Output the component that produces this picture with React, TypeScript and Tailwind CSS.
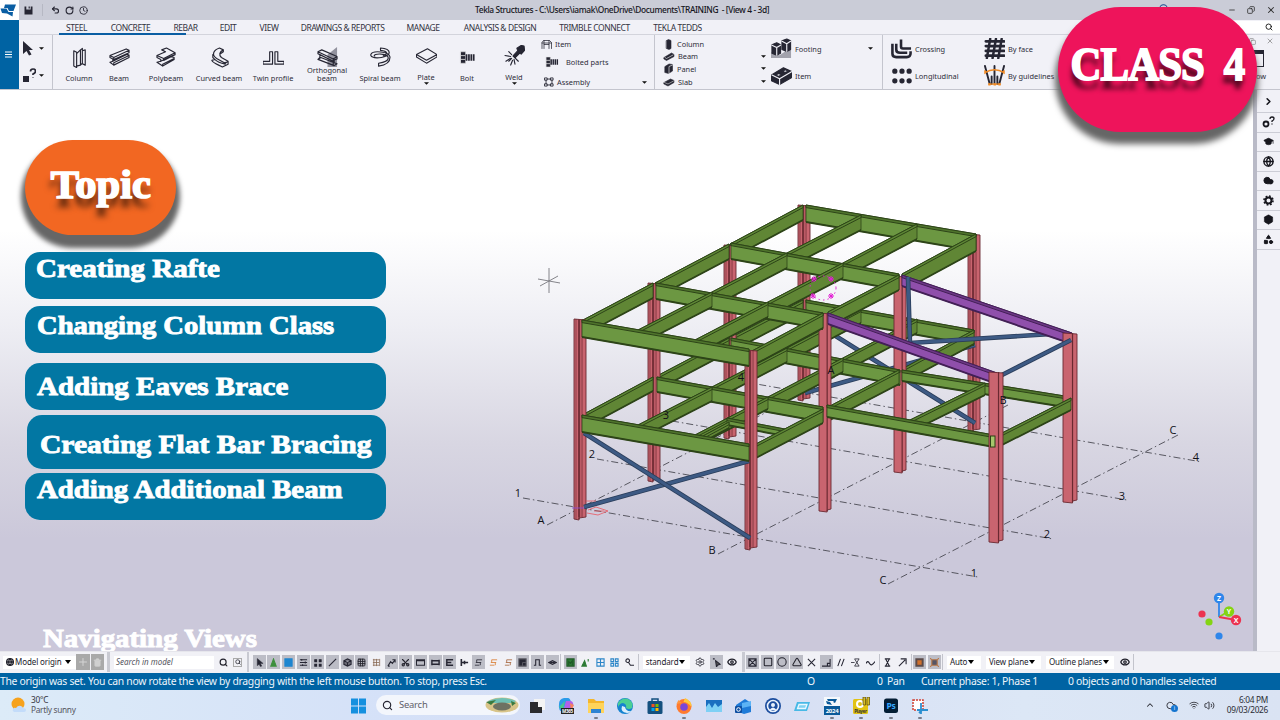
import React from 'react';
import {
  Box, ChevronRight, ChevronUp, Clock, Cloud, Eye, Globe, GraduationCap, Minus, MousePointer2,
  Plus, Undo2, RotateCw, Search, Settings, Shapes, Trash2, Volume2, Wifi, X, Copy, Circle,
  Square, Triangle, Scissors, Grid3x3,
} from 'lucide-react';

const INK = '#262633';

/* ---------- Ribbon icons ---------- */

const Glyph: React.FC<{ children: React.ReactNode; className?: string; box?: string }> = ({ children, className = 'w-[21px] h-[21px]', box = '0 0 22 22' }) => (
  <svg className={`${className} shrink-0`} viewBox={box} fill="none" stroke={INK} strokeWidth="1.2" strokeLinejoin="round" strokeLinecap="round">
    {children}
  </svg>
);

const ColumnIcon = () => (
  <Glyph><path d="M5 4l3 1.5v16L5 20zM8 7l4-4v16l-4 1M12 3l2-1.5v15.5l-2 2M14 4l3-1v16l-3-1.5" /></Glyph>
);
const BeamIcon = () => (
  <Glyph><path d="M1 9L18 2l3 1.5L5 11zM1 9v2l3 1.5V15L1 16l4 3 16-8v-2.5l-3-1M5 11v2l16-7V3.500M4 15l14-7M5 19v-2.500l16-7.500" /></Glyph>
);
const PolybeamIcon = () => (
  <Glyph><path d="M6 3L11 1l9 5-12 6-7-3 9-4zM1 9v2l4 2v2l-4 1 6 4 12-7v-2l-4-1 5-2V6M8 12v2l12-6M5 15l10-5M7 20v-2l12-6" /></Glyph>
);
const CurvedIcon = () => (
  <Glyph><path d="M11 1l4 2c-4 2-5 5-2 8l7 4-3 2-9-5C2 8 5 3 11 1zM4 8v3l2 2-3 1c1 3 8 5 11 7l6-3v-3M6 13c3 3 6 4 11 5v-2M15 3v2l-3 2" /></Glyph>
);
const TwinIcon = () => (
  <Glyph><path d="M7 5h3v13H0v-3h7zM12.500 5h3v10H22v3h-9.500z" /></Glyph>
);
const OrthoIcon = () => (
  <Glyph>
    <path d="M11 8L21 0v21H11z" fill="#92929e" stroke="none" />
    <path d="M1 5l4-2 16 7v2.500l-3 1v3l3 1-3 2L1 13l2-2V8L1 7zM1 5l16 7.500 4-2.500M3 8l14 7M1 13l3-2 14 5.500M17 12.500v3M17 19v-2" />
  </Glyph>
);
const SpiralIcon = () => (
  <Glyph>
    <path d="M11 1c12 1 12 8 1 10-9 1.500-12-1.500-11-3.500 2-4 19-3 20 3 0 7-8 9-12 9.500v-3c14-2 12-9 3-9.500-5-.5-9 1-7 2M11 1v2.500c8 1 8 4 3 5.500" />
  </Glyph>
);
const PlateIcon = () => (
  <Glyph><path d="M.5 10L12 4l10 6-11 6zM.5 10v2.500L11 19l11-6.500V10" /></Glyph>
);
const BoltIcon: React.FC<{ className?: string }> = ({ className }) => (
  <Glyph className={className}>
    <path d="M4 5h5v4H4zM4 9h5v4H4zM4 13h5v4H4z" fill={INK} stroke="#ddd" strokeWidth=".6" />
    <path d="M10 7.500v7M12.500 7.500v7M15 7.500v7M17.500 7.500v7" strokeWidth="1.800" strokeLinecap="butt" />
  </Glyph>
);
const WeldIcon = () => (
  <Glyph>
    <path d="M9.500 11.500l2 2 5-5 1.500 1 3.500-4L21 1l-3-.5-4.500 3 1 2.500z" fill={INK} />
    <path d="M8 14L5 17M10.500 15l1 5M9 16l-2 5M12 14l3 3M6.500 14L2 17M7 12l-6-1M8 10L5 7" />
  </Glyph>
);

const MiniItem = () => (
  <Glyph className="w-[11px] h-[11px]"><path d="M2 19V7l3-4h12l4 4v12M2 8h19M6 19v-8h10v8M6 3v8M16 3v8" strokeWidth="1.500" /></Glyph>
);
const MiniAssembly = () => (
  <Glyph className="w-[10px] h-[10px]"><path d="M2 2h5v5H2zM15 2h5v5h-5zM2 15h5v5H2zM15 15h5v5h-5zM7 4.500h8M7 17.500h8M4.500 7v8M17.500 7v8" strokeWidth="1.900" /></Glyph>
);
const MiniColumn = () => (
  <Glyph className="w-[11px] h-[11px]"><path d="M7 3l4-2 5 2v16l-4 2-5-2z" fill={INK} /></Glyph>
);
const MiniBeam = () => (
  <Glyph className="w-[12px] h-[11px]"><path d="M1 13L16 4l5 3v4L6 19l-5-3z" fill={INK} /><path d="M3 13l3 2 13-7" stroke="#fff" /></Glyph>
);
const MiniPanel = () => (
  <Glyph className="w-[11px] h-[11px]"><path d="M4 7l8-5 7 1v13l-8 5-7-2z" fill={INK} /><path d="M12 21V7l7-3" stroke="#fff" /></Glyph>
);
const MiniSlab = () => (
  <Glyph className="w-[12px] h-[11px]"><path d="M1 13L14 6l7 3v4l-12 7-8-4z" fill={INK} /><path d="M2 13l7 3 11-6" stroke="#ddd" /></Glyph>
);
const FootingIcon = () => (
  <Glyph>
    <path d="M0 15l9 3 12-8v11H0z" fill="#a2a2ac" stroke="none" />
    <path d="M1 7l5-2 4 2v9l-4 2-5-2zM11.500 3l5-2 4 2v9l-4 2-5-2z" fill={INK} />
    <path d="M1 7.500L6 10l4-2.500M6 10v8M11.500 3.500l5 2.500 4-2.500M16.500 6v8" stroke="#f1f1f7" />
  </Glyph>
);
const BrickIcon = () => (
  <Glyph>
    <path d="M.5 10.500L13 3l9 4v6L9 20.500l-8.500-4z" fill={INK} />
    <path d="M1 10.500l8 4L21.500 7M9 14.500v6" stroke="#f1f1f7" />
    <path d="M5 10.500l3-1.700 3 1.300-3 1.900zM12 6.500l3-1.600 3 1.300-3 1.700z" fill="#f1f1f7" />
  </Glyph>
);
const CrossingIcon = () => (
  <Glyph><path d="M1.500 6v10.500q0 3.500 4 3.500h11q4 0 4-4v-2M5.500 6v6q0 3.500 4 3.500H17M10.500 1.500V9q0 2 2 2H21" strokeWidth="2.700" strokeLinecap="butt" /></Glyph>
);
const LongitudinalIcon = () => (
  <Glyph><path d="M4 6.500h.01M11.500 6.500h.01M19 6.500h.01M4 16.500h.01M11.500 16.500h.01M19 16.500h.01" strokeWidth="5.500" /></Glyph>
);
const FaceIcon = () => (
  <Glyph>
    <path d="M2 3.500h19M2 8.500h19M2 13.500h19M2 18.500h19" strokeWidth="3" />
    <path d="M6.500 1L3 21M12.500 1L9 21M18.500 1L15 21" strokeWidth="2.600" />
  </Glyph>
);
const GuideIcon = () => (
  <Glyph>
    <path d="M1 1l5 19M8 12v8M11 1v18M14 12v8M21 1l-5 19" strokeWidth="2" />
    <path d="M1 8Q11 2 21 8M5 20h12M1 6v3M21 6v3" stroke="#f08a24" strokeWidth="1.500" />
    <path d="M4.500 19h2.500v2.500H4.500zM10 19h2.500v2.500H10zM15 19h2.500v2.500H15z" fill="#f08a24" stroke="none" />
  </Glyph>
);

const Caret: React.FC<{ className?: string }> = ({ className = '' }) => (
  <svg className={`w-[5px] h-[3px] shrink-0 ${className}`} viewBox="0 0 6 3"><path d="M0 0h6L3 3z" fill="#111" /></svg>
);

/* ---------- Top of the window ---------- */

const TitleBar = () => (
  <div className="flex h-5 items-center bg-[#caccd7]">
    <div className="flex h-5 w-[19px] items-center bg-white">
      <svg className="h-[13px] w-4" viewBox="0 0 16 13">
        <path d="M5 .5h11L13.500 7H9L7.500 4H4z" fill="#0a5ea3" />
        <path d="M.5 4.500h6L8.500 8H13l-.5 4.500L7 9.500 2 9z" fill="#0a5ea3" />
      </svg>
    </div>
    <svg className="ml-[5px] h-[9px] w-[9px]" viewBox="0 0 9 9">
      <path d="M.5.5h1.800v3h4.400v-3h1.800v8h-8zM4.600.5h1.200v2H4.600z" fill={INK} />
    </svg>
    <div className="ml-[9px] h-3 w-px bg-[#b6b8c3]" />
    <Undo2 className="ml-2 h-[10px] w-[9px]" strokeWidth={3} color={INK} />
    <RotateCw className="ml-[5px] h-[9px] w-[9px]" strokeWidth={3} color={INK} />
    <Clock className="ml-[5px] h-[9px] w-[9px]" strokeWidth={2.300} color={INK} />
    <div className="ml-[387px] w-[300px] whitespace-pre text-[8.400px] font-medium tracking-[-0.380px] text-[#16161d]">
      Tekla Structures - C:\Users\iamak\OneDrive\Documents\TRAINING  - [View 4 - 3d]
    </div>
    <div className="ml-auto flex items-center gap-[11px] pr-[4px] text-[#333]">
      <Circle className="mb-1 mr-[49px] h-[9px] w-[9px]" strokeWidth={3} color="#1b4a91" />
      <Minus className="h-2 w-2" strokeWidth={2.500} />
      <Copy className="h-2 w-2 -scale-x-100" strokeWidth={2.500} />
      <X className="h-[10px] w-[10px]" strokeWidth={2.500} />
    </div>
  </div>
);

const TABS = [
  { name: 'STEEL', cell: 'w-[47px]' },
  { name: 'CONCRETE', cell: 'w-[61px]' },
  { name: 'REBAR', cell: 'w-[49px]' },
  { name: 'EDIT', cell: 'w-[36px]' },
  { name: 'VIEW', cell: 'w-[46px]' },
  { name: 'DRAWINGS & REPORTS', cell: 'w-[101px]' },
  { name: 'MANAGE', cell: 'w-[60px]' },
  { name: 'ANALYSIS & DESIGN', cell: 'w-[94px]' },
  { name: 'TRIMBLE CONNECT', cell: 'w-[95px]' },
  { name: 'TEKLA TEDDS', cell: 'w-[71px]' },
];

const TabRow = () => (
  <div className="flex h-[15px] items-center border-b border-[#d3d4dc]">
    <div className="flex h-[15px] pl-[34px]">
      {TABS.map((t, i) => (
        <div key={t.name} className={`${t.cell} relative flex h-[15px] items-center justify-center whitespace-nowrap pt-[2px] text-[8.500px] tracking-[-0.450px] text-[#33333f]`}>
          {t.name}
          {i === 0 && <div className="absolute left-[6px] top-[13px] h-[2px] w-[127px] bg-[#0a5ea3]" />}
        </div>
      ))}
    </div>
    <div className="ml-auto flex h-[12px] w-[60px] items-center justify-end bg-white pr-[7px]">
      <Search className="h-[8px] w-[8px]" strokeWidth={2.500} />
    </div>
  </div>
);

const TOOLS = [
  { label: 'Column', cell: 'w-[38px]', icon: <ColumnIcon /> },
  { label: 'Beam', cell: 'w-[42px]', icon: <BeamIcon /> },
  { label: 'Polybeam', cell: 'w-[52px]', icon: <PolybeamIcon /> },
  { label: 'Curved beam', cell: 'w-[54px]', icon: <CurvedIcon /> },
  { label: 'Twin profile', cell: 'w-[54px]', icon: <TwinIcon /> },
  { label: 'Orthogonal beam', cell: 'w-[54px]', icon: <OrthoIcon />, wrap: true },
  { label: 'Spiral beam', cell: 'w-[52px]', icon: <SpiralIcon /> },
  { label: 'Plate', cell: 'w-[40px]', icon: <PlateIcon />, caret: true },
  { label: 'Bolt', cell: 'w-[42px]', icon: <BoltIcon /> },
  { label: 'Weld', cell: 'w-[52px]', icon: <WeldIcon />, caret: true },
];

const Row: React.FC<{ icon: React.ReactNode; label: string; className?: string; caret?: boolean }> = ({ icon, label, className = '', caret }) => (
  <div className={`flex items-center ${className}`}>
    {icon}
    <span className="ml-[3px] whitespace-nowrap">{label}</span>
    {caret && <Caret className="ml-auto" />}
  </div>
);

const Ribbon = () => (
  <div className="flex h-[54px] text-[7.400px] leading-[8px] text-[#2d2d39]">
    <div className="flex w-[34px] flex-col justify-between border-r border-[#c4c5ce] py-[6px] pl-[4px]">
      <div className="flex items-center gap-[6px]">
        <svg className="h-[15px] w-[10px]" viewBox="0 0 10 15"><path d="M0 0l10 9H6l2.500 4.500L6 14.500 3.500 10 0 13z" fill={INK} /></svg>
        <Caret />
      </div>
      <div className="flex items-center gap-[3px]">
        <svg className="h-[15px] w-[13px]" viewBox="0 0 13 15">
          <path d="M0 8h6v6H0z" fill={INK} />
          <path d="M7.500 3.500q0-2.500 2.500-2.500t2.500 2.200Q12.500 5 10 6v1M10 9v.6" fill="none" stroke={INK} strokeWidth="1.700" />
        </svg>
        <Caret />
      </div>
    </div>
    <div className="flex w-[602px] border-r border-[#c4c5ce] pl-[7px]">
      {TOOLS.map((t) => (
        <div key={t.label} className={`${t.cell} flex flex-col items-center text-center ${t.caret ? 'pt-[10px]' : 'pt-[12px]'}`}>
          {t.icon}
          <div className={t.wrap ? '-mt-[2px] w-[46px]' : t.caret ? 'mt-[7px] whitespace-nowrap' : 'mt-[6px] whitespace-nowrap'}>{t.label}</div>
          {t.caret && <Caret className="mt-px" />}
        </div>
      ))}
      <div className="flex w-[107px] flex-col pt-[4px]">
        <Row className="h-[10px] pl-px" icon={<MiniItem />} label="Item" />
        <Row className="mt-[8px] h-[10px] pl-[3px]" icon={<BoltIcon className="mr-[2px] h-[18px] w-[18px]" />} label="Bolted parts" />
        <Row className="mt-[10px] h-[10px] pl-[4px]" icon={<MiniAssembly />} label="Assembly" caret />
      </div>
    </div>
    <div className="flex w-[228px] border-r border-[#c4c5ce]">
      <div className="flex w-[111px] flex-col pl-[8px] pt-[3px]">
        <Row className="h-[12px]" icon={<MiniColumn />} label="Column" />
        <Row className="h-[12px]" icon={<MiniBeam />} label="Beam" caret />
        <Row className="h-[13px]" icon={<MiniPanel />} label="Panel" caret />
        <Row className="h-[13px]" icon={<MiniSlab />} label="Slab" caret />
      </div>
      <div className="flex w-[107px] flex-col gap-[6px] pl-[5px] pt-[3px]">
        <Row icon={<FootingIcon />} label="Footing" caret />
        <Row icon={<BrickIcon />} label="Item" />
      </div>
    </div>
    <div className="flex w-[94px] flex-col gap-[6px] pl-[8px] pt-[3px]">
      <Row icon={<CrossingIcon />} label="Crossing" />
      <Row icon={<LongitudinalIcon />} label="Longitudinal" />
    </div>
    <div className="flex flex-col gap-[6px] pl-[7px] pt-[3px]">
      <Row icon={<FaceIcon />} label="By face" />
      <Row icon={<GuideIcon />} label="By guidelines" />
    </div>
    <div className="ml-auto flex w-[46px] flex-col">
      <div className="flex h-[12px] items-center justify-end gap-[10px] pr-[6px] text-[#777]">
        <Copy className="h-[7px] w-[7px]" />
        <X className="h-2 w-2" />
      </div>
      <div className="mt-[3px] h-[17px] w-[30px] border border-t-4 border-[#262633]" />
      <div className="mt-[5px] pl-1">Window</div>
    </div>
  </div>
);

/* ---------- 3D model ---------- */

type Pt = [number, number];
const pts = (...p: Pt[]) => p.map((q) => q.join(',')).join(' ');

interface MemberProps { a: Pt; b: Pt; d?: number; web?: string; flange?: string; edge?: string }

// I-beam seen slightly from above: web face, top flange strip, bottom flange strip
const Member: React.FC<MemberProps> = ({ a, b, d = 15, web = '#6c9742', flange = '#4f742c', edge = '#2d4418' }) => {
  const down = (p: Pt, k: number): Pt => [p[0], p[1] + k];
  return (
    <g stroke={edge} strokeWidth=".8" strokeLinejoin="round">
      <polygon points={pts(a, b, down(b, d), down(a, d))} fill={web} />
      <polygon points={pts(a, b, down(b, 2.6), down(a, 2.6))} fill={flange} strokeWidth="1" />
      <polygon points={pts(down(a, d - 1), down(b, d - 1), down(b, d + 1), down(a, d + 1))} fill={edge} stroke="none" />
    </g>
  );
};

const Along: React.FC<{ a: Pt; b: Pt; d?: number }> = ({ a, b, d = 14 }) => <Member a={a} b={b} d={d} web="#608635" flange="#5d8635" />;
const Rafter: React.FC<{ a: Pt; b: Pt }> = ({ a, b }) => <Member a={a} b={b} d={11} web="#8f4fab" flange="#6d3786" edge="#432056" />;

const Post: React.FC<{ x: number; top: number; bottom: number; w?: number; solid?: boolean }> = ({ x, top, bottom, w = 12, solid }) => {
  const split = solid ? w * 0.68 : w * 0.42;
  return (
    <g stroke="#6a2931" strokeWidth=".9">
      <polygon points={pts([x, top], [x + w, top + 1], [x + w, bottom - 2], [x + split, bottom - 1], [x + split, bottom + 1], [x, bottom])} fill="#c9646f" />
      {!solid && <rect x={x + split - 1} y={top} width="2.200" height={bottom - top - 2} fill="#8e3d47" stroke="none" />}
      {!solid && <line x1={x + 2} y1={top} x2={x + 2} y2={bottom} strokeWidth=".6" />}
      <line x1={x + split} y1={top} x2={x + split} y2={bottom} strokeWidth="1.200" />
      {!solid && <line x1={x + split + 3} y1={top} x2={x + split + 3} y2={bottom - 2} strokeWidth=".7" />}
    </g>
  );
};

const Brace: React.FC<{ a: Pt; b: Pt }> = ({ a, b }) => (
  <g>
    <line x1={a[0]} y1={a[1]} x2={b[0]} y2={b[1]} stroke="#2a3d5a" strokeWidth="4.600" />
    <line x1={a[0]} y1={a[1]} x2={b[0]} y2={b[1]} stroke="#3d5a84" strokeWidth="3" />
  </g>
);

const GRID: [Pt, Pt][] = [
  [[523, 498], [978, 577]],
  [[597, 459], [1053, 539]],
  [[672, 421], [1127, 500]],
  [[745, 382], [1202, 462]],
  [[547, 525], [835, 377]],
  [[718, 554], [1008, 405]],
  [[888, 584], [1178, 435]],
];

const GRID_LABELS: [string, number, number][] = [
  ['1', 518, 497], ['2', 592, 458], ['3', 666, 419], ['4', 741, 381],
  ['A', 541, 524], ['B', 712, 554], ['C', 883, 584],
  ['1', 974, 577], ['2', 1047, 538], ['3', 1122, 500], ['4', 1196, 461],
  ['A', 831, 374], ['B', 1003, 404], ['C', 1173, 434],
];

const Model = () => (
  <svg className="block h-[561px] w-[1253px]" viewBox="0 90 1253 561">
    <g stroke="#4a4a52" strokeWidth=".9" strokeDasharray="7 3 1.500 3">
      {GRID.map(([a, b], i) => <line key={i} x1={a[0]} y1={a[1]} x2={b[0]} y2={b[1]} />)}
    </g>

    {/* axis 4 */}
    <Post x={798} top={205} bottom={400} />
    <Post x={968} top={234} bottom={431} />
    <Brace a={[810, 320]} b={[975, 423]} />
    <Brace a={[805, 393]} b={[975, 345]} />
    <Member a={[806, 300]} b={[974, 330]} />
    <Member a={[806, 205]} b={[976, 234]} d={17} />

    {/* bay 3-4 */}
    <Along a={[730, 338]} b={[803, 300]} />
    <Along a={[787, 348]} b={[861, 309]} />
    <Along a={[843, 358]} b={[917, 319]} />
    <Along a={[902, 369]} b={[974, 330]} />
    <Along a={[730, 244]} b={[803, 205]} d={15} />
    <Along a={[787, 253]} b={[861, 215]} d={15} />
    <Along a={[843, 263]} b={[917, 224]} d={15} />
    <Along a={[902, 274]} b={[976, 234]} d={17} />

    {/* axis 3 */}
    <Post x={724} top={245} bottom={438} />
    <Post x={894} top={276} bottom={472} solid />
    <Member a={[731, 338]} b={[900, 370]} />
    <Member a={[902, 370]} b={[1071, 397]} d={11} />
    <Member a={[731, 243]} b={[899, 274]} d={16} />
    <Brace a={[910, 343]} b={[1067, 333]} />
    <Rafter a={[902, 275]} b={[1072, 333]} />
    <Brace a={[908, 277]} b={[910, 345]} />
    <Post x={1063} top={333} bottom={502} w={14} solid />
    <Brace a={[1000, 376]} b={[1071, 340]} />

    {/* bay 2-3 */}
    <Along a={[655, 377]} b={[729, 338]} />
    <Along a={[712, 387]} b={[787, 348]} />
    <Along a={[768, 397]} b={[843, 358]} />
    <Along a={[828, 407]} b={[899, 370]} />
    <Along a={[910, 420]} b={[985, 383]} d={12} />
    <Along a={[1000, 434]} b={[1071, 398]} d={12} />
    <Along a={[655, 283]} b={[729, 244]} d={15} />
    <Along a={[712, 292]} b={[787, 253]} d={15} />
    <Along a={[768, 302]} b={[843, 263]} d={15} />
    <Along a={[828, 312]} b={[899, 275]} d={15} />

    {/* axis 2 */}
    <Post x={648} top={283} bottom={481} />
    <Post x={819} top={313} bottom={511} solid />
    <Member a={[657, 377]} b={[823, 407]} />
    <Member a={[827, 405]} b={[994, 435]} d={12} />
    <Member a={[656, 283]} b={[823, 313]} d={16} />
    <Rafter a={[828, 313]} b={[997, 373]} />
    <Post x={989} top={372} bottom={542} w={14} solid />
    <rect x="990.500" y="436" width="4.500" height="11" fill="#a6c66c" stroke="#2a4115" />

    {/* bay 1-2 */}
    <Along a={[584, 414]} b={[653, 377]} />
    <Along a={[638, 425]} b={[712, 387]} />
    <Along a={[695, 435]} b={[768, 397]} d={12} />
    <Member a={[727, 418]} b={[790, 430]} d={7} />
    <Along a={[703, 436]} b={[729, 422]} d={6} />
    <Along a={[752, 446]} b={[823, 409]} />
    <Along a={[583, 320]} b={[653, 283]} d={15} />
    <Along a={[638, 330]} b={[712, 292]} d={15} />
    <Along a={[695, 340]} b={[768, 302]} d={15} />
    <Along a={[752, 351]} b={[823, 313]} d={15} />

    {/* axis 1 */}
    <Post x={574} top={319} bottom={519} />
    <Post x={745} top={350} bottom={549} />
    <Brace a={[584, 507]} b={[749, 461]} />
    <Brace a={[584, 433]} b={[750, 538]} />
    <Member a={[582, 415]} b={[749, 444]} d={17} />
    <Member a={[582, 320]} b={[749, 349]} d={17} />

    <g fill="#111118" fontFamily="'Open Sans', 'Noto Sans', sans-serif" fontSize="11" textAnchor="middle">
      {GRID_LABELS.map(([t, x, y], i) => <text key={i} x={x} y={y}>{t}</text>)}
    </g>

    {/* work plane origin */}
    <g fill="none" stroke="#e8555f" strokeWidth=".8">
      <path d="M586 501h10M588 510l8-3 12 4-10 4-11-2M594 511h10" />
      <path d="M572 508h12" stroke="#8a4be0" />
    </g>

    {/* rotation centre marker */}
    <ellipse cx="823" cy="288" rx="13" ry="12" fill="none" stroke="#e21fd3" strokeDasharray="1.500 3" />
    <g stroke="#e21fd3" strokeWidth="1">
      {[[814, 279], [831, 279], [813, 296], [831, 296]].map(([x, y]) => (
        <path key={`${x}-${y}`} d={`M${x - 3} ${y}h6M${x} ${y - 3}v6M${x - 2} ${y - 2}l4 4M${x + 2} ${y - 2}l-4 4`} />
      ))}
    </g>

    {/* cursor */}
    <path d="M538 279l22 4M540 286l18-10M549 268v25" stroke="#77777d" strokeWidth=".9" />

    {/* axis triad */}
    <g strokeWidth="1.800">
      <path d="M1219 617v-19" stroke="#2f86ea" />
      <path d="M1219 617l10-6" stroke="#84d413" />
      <path d="M1219 617l17 3" stroke="#ec3350" />
    </g>
    <circle cx="1219" cy="598" r="5.200" fill="#2f86ea" />
    <circle cx="1229" cy="611.500" r="5.200" fill="#84d413" />
    <circle cx="1236" cy="620" r="5.200" fill="#ec3350" />
    <circle cx="1202" cy="614" r="3.600" fill="#ec3350" />
    <circle cx="1209" cy="622" r="3.600" fill="#84d413" />
    <circle cx="1219" cy="636" r="3.600" fill="#2f86ea" />
    <g fill="#fff" fontFamily="'Open Sans', sans-serif" fontSize="7" fontWeight="bold" textAnchor="middle">
      <text x="1219" y="600.500">Z</text>
      <text x="1229" y="614">Y</text>
      <text x="1236" y="622.500">X</text>
    </g>
  </svg>
);

/* ---------- Video callouts ---------- */

const TOPICS = [
  { text: 'Creating Rafte', box: 'h-[47px] pl-[11px] pt-0', type: 'scale-x-[1.115]' },
  { text: 'Changing Column Class', box: 'mt-[7px] h-[47px] pl-[12px] pt-[3px]', type: 'scale-x-[1.100]' },
  { text: 'Adding Eaves Brace', box: 'mt-[10px] h-[47px] pl-[12px] pt-[7px]', type: 'scale-x-[1.115]' },
  { text: 'Creating Flat Bar Bracing', box: 'ml-[2px] mt-[5px] h-[54px] pl-[13px] pt-[13px]', type: 'scale-x-[1.137]' },
  { text: 'Adding Additional Beam', box: 'mt-[4px] h-[47px] pl-[12px] pt-0', type: 'scale-x-[1.107]' },
];

const Callouts = () => (
  <div className="absolute left-[25px] top-[162px] w-[361px]">
    {TOPICS.map((t) => (
      <div key={t.text} className={`${t.box} rounded-[15px] bg-[#0277a3]`}>
        <div className={`${t.type} w-max origin-left whitespace-nowrap font-['Liberation_Serif',serif] text-[26px] font-bold leading-[34px] text-white [-webkit-text-stroke:0.900px_white]`}>
          {t.text}
        </div>
      </div>
    ))}
  </div>
);

const Viewport = () => (
  <div className="relative w-[1253px] overflow-hidden bg-[linear-gradient(to_bottom,#fff_25%,#ededf3_43%,#d8d6e2_63%,#cbc8da_80%)]">
    <Model />
    <div className="absolute left-[25px] top-[50px] flex h-[95px] w-[151px] items-center justify-center rounded-[48px] bg-[#f26722] pb-[5px] font-['Liberation_Serif',serif] text-[39px] font-bold text-white shadow-[0_9px_5px_4px_#666]">
      <span className="scale-x-[1.090] [-webkit-text-stroke:1.600px_white] [text-shadow:-1px_9px_6px_#000a]">Topic</span>
    </div>
    <Callouts />
    <div className="absolute left-[43px] top-[537px] w-max origin-left scale-x-[1.109] whitespace-nowrap font-['Liberation_Serif',serif] text-[26px] font-bold leading-[24px] text-white [-webkit-text-stroke:0.900px_white]">
      Navigating Views
    </div>
  </div>
);

const HelpGear = () => (
  <svg className="h-[13px] w-[13px]" viewBox="0 0 13 13" fill="none" stroke="#16161d">
    <circle cx="4" cy="8" r="2.500" strokeWidth="1.800" />
    <path d="M8 3q0-2 2-2t2 1.700Q12 4 10 5v1M10 7.500v1" strokeWidth="1.300" />
  </svg>
);

const GearIcon = () => (
  <svg className="h-[11px] w-[11px]" viewBox="0 0 11 11" fill="none" stroke="#16161d">
    <circle cx="5.500" cy="5.500" r="3" strokeWidth="2" />
    <circle cx="5.500" cy="5.500" r="4.500" strokeWidth="1.600" strokeDasharray="1.770 1.764" />
  </svg>
);

const SidePanel = () => {
  const icon = 'w-[11px] h-[11px]';
  const items = [
    <HelpGear />,
    <GraduationCap className={`${icon} fill-[#16161d]`} strokeWidth={1.500} />,
    <Globe className={icon} strokeWidth={3} />,
    <Cloud className={`${icon} fill-[#16161d]`} />,
    <GearIcon />,
    <Box className={`${icon} fill-[#16161d]`} stroke="#16161d" strokeWidth={1.300} />,
    <Shapes className={`${icon} fill-[#16161d]`} />,
  ];
  return (
    <div className="flex flex-1 flex-col border-l-4 border-[#b9bac7] bg-[#f1f1f7] text-[#16161d]">
      <div className="flex h-[22px] items-center justify-center"><ChevronRight className={icon} strokeWidth={3.500} /></div>
      {items.map((it, i) => (
        <div key={i} className="flex h-[19.500px] items-center justify-center border-t border-[#cccdd6]">{it}</div>
      ))}
      <div className="border-t border-[#cccdd6]" />
    </div>
  );
};

/* ---------- Selection toolbar ---------- */

const Cell: React.FC<{ on?: boolean; children: React.ReactNode }> = ({ on, children }) => (
  <div className="flex w-[14.650px] shrink-0 justify-center">
    <div className={`flex h-[14px] w-[13px] items-center justify-center ${on ? 'bg-[#bcbdc6]' : ''}`}>{children}</div>
  </div>
);

const Mark: React.FC<{ d: string; color?: string; fill?: string; w?: number }> = ({ d, color = INK, fill = 'none', w = 1.2 }) => (
  <svg className="h-[9px] w-[9px]" viewBox="0 0 10 10"><path d={d} stroke={color} fill={fill} strokeWidth={w} /></svg>
);

const SELECT_ICONS: [boolean, React.ReactNode][] = [
  [true, <Mark d="M2.500.5L9 6H6l1.500 3-1.500.5L4.500 7l-2 1.500z" fill={INK} w={0.5} />],
  [true, <Mark d="M5 1l3 8H2z" color="#3d8f3d" fill="#3d8f3d" />],
  [true, <Mark d="M1 1h8v8H1z" color="#1e86d0" fill="#1e86d0" />],
  [true, <Mark d="M1 2h8M1 5h8M1 8h8M3 1v2M7 4v2M4 7v2" />],
  [true, <Mark d="M2 2h2v2H2zM7 2h2v2H7zM2 7h2v2H2zM7 7h2v2H7z" fill={INK} />],
  [true, <Mark d="M1 9l8-8" />],
  [true, <Mark d="M1 3l4-2 4 2v4L5 9 1 7zM1 3l4 2 4-2M5 5v4" fill="#26263388" />],
  [true, <Grid3x3 className="h-[9px] w-[9px]" strokeWidth={2.500} />],
  [false, <Mark d="M1 2h7M1 5h7M1 8h7M2 1v8M5 1v8M8.500 1v8" color="#8a6a55" w={0.9} />],
  [true, <Mark d="M1 9l3-5 2 2 3-4M6 2h3v3M1 9h2" />],
  [true, <Scissors className="h-[9px] w-[9px] -rotate-90" strokeWidth={3} />],
  [true, <Mark d="M.5 2h9v6h-9zM.5 3h9" />],
  [true, <Mark d="M1 2v6M9 2v6M1 3h8M1 7h8" w={1.600} />],
  [true, <Mark d="M2 1v8M2 2h7M2 5h5M2 8h7" w={1.600} />],
  [false, <Mark d="M1.500 1v8M2 5h7M5 3v4" w={1.800} />],
  [true, <Mark d="M3 2h6M2 5h6M1 8h5M3 2v3M7 5v3" w={0.9} />],
  [false, <Mark d="M3 2h6M2 5h6M1 8h5M3 2v3M7 5v3" color="#d97a2e" w={0.9} />],
  [false, <Mark d="M3 2h6M2 5h6M1 8h5M3 2v3M7 5v3" color="#a5643b" w={0.9} />],
  [true, <Mark d="M1 1h8v8H1zM5 5h4M5 5v4" fill="#262633" color="#55555f" />],
  [true, <Mark d="M1 8h2V2h4v6h2" />],
  [true, <Mark d="M1 5l4-2 4 2-4 2zM3 5h4" />],
];

const SELECT_MORE: [boolean, React.ReactNode][] = [
  [true, <Mark d="M1 1h8v8H1zM3 8V4l2 2 2-3v5" fill="#2d7b35" color="#1f5a27" />],
  [false, <Mark d="M4 3l2 6H1zM8 1v3" fill="#2d7b35" color="#2d7b35" />],
  [false, <Mark d="M1 1h8v8H1zM1 5h8M5 1v8" color="#2c86c8" />],
  [false, <Mark d="M1 1h3v3H1zM6 1h3v3H6zM1 6h3v3H1zM6 6h3v3H6z" color="#2c86c8" />],
  [false, <Mark d="M1 3a2 2 0 104 0 2 2 0 10-4 0M4 5l2 3h4" />],
];

const SNAP_ICONS: [boolean, React.ReactNode][] = [
  [true, <Mark d="M1 1h8v8H1zM1 1l8 8M9 1L1 9" />],
  [true, <Square className="h-[10px] w-[10px]" strokeWidth={2.500} />],
  [true, <Circle className="h-[10px] w-[10px]" strokeWidth={2.500} />],
  [true, <Triangle className="h-[10px] w-[10px]" strokeWidth={2.500} />],
  [false, <Mark d="M1 1l8 8M9 1L1 9" />],
  [true, <Mark d="M0 9h9V1M6 9V6h3" />],
  [false, <Mark d="M2 9l3-8M6 9l3-8" />],
  [false, <Mark d="M0 5h4M4 1h5L4 9h5L4 1" w={0.9} />],
  [false, <Mark d="M0 6q2-4 4 0t6-2" />],
];

const cells = (list: [boolean, React.ReactNode][]) => list.map(([on, icon], i) => <Cell key={i} on={on}>{icon}</Cell>);

const Picker: React.FC<{ label: string; className: string }> = ({ label, className }) => (
  <div className={`flex h-[13px] shrink-0 items-center bg-white pl-[3px] ${className}`}>
    <span className="whitespace-nowrap tracking-[-0.100px]">{label}</span>
    <svg className="ml-px h-1 w-[6px]" viewBox="0 0 6 4"><path d="M0 0h6L3 4z" /></svg>
  </div>
);

const Rule: React.FC<{ className?: string }> = ({ className = '' }) => <div className={`h-4 w-px shrink-0 bg-[#c3c4cc] ${className}`} />;

const SelectionBar = () => (
  <div className="flex h-[22px] items-center border-t border-[#e6e6ec] bg-[#f1f1f6] text-[8px] text-[#22222c]">
    <div className="ml-[3px] flex h-[13px] w-[73px] items-center bg-white pl-[3px]">
      <Globe className="h-[8px] w-[8px]" strokeWidth={4} />
      <span className="ml-px whitespace-nowrap tracking-[-0.100px]">Model origin</span>
      <svg className="ml-[3px] h-1 w-[6px]" viewBox="0 0 6 4"><path d="M0 0h6L3 4z" /></svg>
    </div>
    <div className="flex h-4 w-[14px] items-center justify-center bg-[#a9a9a9]"><Plus className="h-3 w-3" color="#d4d4d4" /></div>
    <div className="ml-px flex h-4 w-[13px] items-center justify-center bg-[#a9a9a9]"><Trash2 className="h-[9px] w-[9px] fill-[#d0d0d0]" color="#d0d0d0" /></div>
    <div className="ml-[3px] h-[20px] w-[3px] bg-[#c9cad2]" />
    <div className="ml-[4px] flex h-[13px] w-[100px] items-center bg-white pl-[2px] italic text-[#55555e]">Search in model</div>
    <Search className="ml-[5px] h-[9px] w-[9px]" strokeWidth={3} />
    <div className="ml-[5px] flex h-[9px] w-[9px] items-center justify-center border border-[#aaa]"><Search className="h-[6px] w-[6px]" strokeWidth={3} /></div>
    <div className="ml-[5px] h-[20px] w-[2px] bg-[#c9cad2]" />
    <div className="ml-[3px] flex">{cells(SELECT_ICONS)}</div>
    <Rule className="ml-px mr-[2px]" />
    <div className="flex">{cells(SELECT_MORE)}</div>
    <Rule className="ml-px" />
    <Picker className="ml-[4px] w-[47px]" label="standard" />
    <div className="ml-[3px] flex gap-[1.500px]">
      <Cell><Settings className="h-[10px] w-[10px]" strokeWidth={2} /></Cell>
      <Cell on><Mark d="M4 3l5 4-3 1-1 2zM1 1h2" fill="#555" /></Cell>
      <Cell><Eye className="h-[10px] w-[10px]" strokeWidth={3} /></Cell>
    </div>
    <div className="ml-[2px] mr-px h-[20px] w-[3px] bg-[#c9cad2]" />
    <div className="flex">{cells(SNAP_ICONS)}</div>
    <Rule className="ml-[2px]" />
    <Cell><Mark d="M2 1h6M2 9h6M3 1l4 8M7 1L3 9" /></Cell>
    <Cell><Mark d="M1 9l7-7M3 1h6v6" /></Cell>
    <Rule className="mx-px" />
    <Cell on><Mark d="M1.500 1.500h7v7h-7z" fill="#d0702c" color="#5b4a48" w={2.200} /></Cell>
    <Cell on><Mark d="M2 2h6v6H2zM0 0l2 2M10 0L8 2M0 10l2-2M10 10L8 8" fill="#555566" color="#b97848" /></Cell>
    <Rule />
    <Picker className="ml-[4px] w-[34px]" label="Auto" />
    <Picker className="ml-[5px] w-[55px]" label="View plane" />
    <Picker className="ml-[5px] w-[68px]" label="Outline planes" />
    <Eye className="ml-[6px] h-[10px] w-[10px]" strokeWidth={3} />
    <Rule className="ml-[3px]" />
  </div>
);

const StatusBar = () => (
  <div className="flex h-[18px] items-center whitespace-nowrap bg-[#0063a3] text-[10.400px] tracking-[-0.300px] text-[#eef5fb]">
    <span className="w-[807px]">The origin was set. You can now rotate the view by dragging with the left mouse button. To stop, press Esc.</span>
    <span className="w-[70px]">O</span>
    <span className="w-[10px]">0</span>
    <span className="w-[34px]">Pan</span>
    <span className="w-[147px]">Current phase: 1, Phase 1</span>
    <span>0 objects and 0 handles selected</span>
  </div>
);

/* ---------- Windows taskbar ---------- */

const App16: React.FC<{ children: React.ReactNode; running?: boolean }> = ({ children, running }) => (
  <div className="flex w-[29.500px] shrink-0 flex-col items-center">
    <svg className="h-[18px] w-[18px]" viewBox="0 0 18 18">{children}</svg>
    <div className={`mt-[2px] h-[2px] w-1 rounded-full ${running ? 'bg-[#777d8a]' : ''}`} />
  </div>
);

const PinnedApps = () => (
  <div className="flex pt-[7px]">
    <App16><path d="M6 2h11v11H6z" fill="#f4f4f4" /><path d="M2 5h8v5h4v6H2z" fill="#2b2b2e" /></App16>
    <App16>
      <path d="M2 7q0-5 5-6h4q2 0 3 4h-4L6 15q-5-1-4-8z" fill="#2b9bea" />
      <path d="M9 4h5q3 1 2 6l-3 5H6z" fill="#b160e8" />
      <path d="M2 10l6-6-2 9z" fill="#48c78e" />
      <path d="M13 6l4 2-3 6z" fill="#f5825c" />
      <rect x="4" y="11" width="13" height="6" fill="#222" />
      <text x="10.500" y="16" fontSize="4.500" fontWeight="bold" fill="#fff" textAnchor="middle">M365</text>
    </App16>
    <App16 running><path d="M1 2h6l2 2h8v12H1z" fill="#f4b62c" /><path d="M1 6h16v10H1z" fill="#ffd45a" /><path d="M4 12h10v4H4z" fill="#2d83d3" /></App16>
    <App16>
      <circle cx="9" cy="9" r="8" fill="#1683d0" />
      <path d="M2 6q4-6 10-4 6 3 4 9-3 2-6 0 1-4-3-5-3 0-5 4z" fill="#4bcf94" />
      <path d="M6 9q-2 6 5 7 3 0 5-2-6 1-7-4z" fill="#dceefb" />
    </App16>
    <App16>
      <rect x="1.500" y="4" width="15" height="13" rx="1.500" fill="#14507f" />
      <path d="M6 4V2h6v2" fill="none" stroke="#14507f" strokeWidth="1.500" />
      <path d="M5.500 7h3v3h-3z" fill="#f25022" /><path d="M9.500 7h3v3h-3z" fill="#7fba00" />
      <path d="M5.500 11h3v3h-3z" fill="#00a4ef" /><path d="M9.500 11h3v3h-3z" fill="#ffb900" />
    </App16>
    <App16 running>
      <circle cx="9" cy="9.500" r="7.500" fill="#ff7a2f" />
      <path d="M10 1q7 3 6.500 9-4-5-8-5z" fill="#ffc93c" />
      <path d="M1.500 7l2-4 3 3z" fill="#ff9640" />
      <circle cx="9" cy="10" r="3.800" fill="#7b46d8" />
    </App16>
    <App16><path d="M1 3h16v12H1z" fill="#1a6fc0" /><path d="M1 10l3-4 3 5 3-5 3 4 4-3v8H1z" fill="#7ed0f5" /></App16>
    <App16>
      <path d="M2 8l9-6 6 4v9l-7 2-8-3z" fill="#1f7bd8" />
      <path d="M8 6l9-2v5l-9 2z" fill="#5db3f5" />
      <rect x="1" y="9" width="7" height="7" rx="1" fill="#0e4fa2" />
      <circle cx="4.500" cy="12.500" r="1.800" fill="none" stroke="#fff" />
    </App16>
    <App16>
      <circle cx="9" cy="9" r="8" fill="#1c4d9e" />
      <circle cx="9" cy="9" r="5.500" fill="none" stroke="#e9f1fc" strokeWidth="1.600" />
      <circle cx="9" cy="8" r="2" fill="#e9f1fc" />
      <path d="M5.500 13q3.500-5 7 0z" fill="#e9f1fc" />
    </App16>
    <App16><path d="M4 5h13l-3 9H1z" fill="#48b9e6" /><path d="M6 7.500h8l-1.500 4h-8z" fill="#7fd2f2" stroke="#e8f8ff" strokeWidth="1.300" /></App16>
    <App16 running>
      <path d="M1 0h16v18H1z" fill="#0a5a99" />
      <path d="M1 0h16v9H1z" fill="#f5f9fc" />
      <path d="M4 2h10l-2 4-2-1 1-1H5zM3 4l4 1 2 3-5-1z" fill="#0a5a99" />
      <text x="9" y="16" fontSize="6" fontWeight="bold" fill="#fff" textAnchor="middle">2024</text>
    </App16>
    <App16 running>
      <rect x="1" y="2" width="15" height="15" rx="1.500" fill="#e2c313" />
      <circle cx="8" cy="7" r="3" fill="none" stroke="#fff" strokeWidth="2" />
      <path d="M11 0h2.500v8H11zM15 0h2.500v8H15z" fill="#d8bd2b" stroke="#55490b" strokeWidth=".7" />
      <text x="8.500" y="15.500" fontSize="4.500" fontWeight="bold" fill="#333" textAnchor="middle">Player</text>
    </App16>
    <App16 running>
      <rect x="2" y="1.500" width="14" height="14.500" rx="2.500" fill="#031d34" />
      <text x="9" y="12" fontSize="8.500" fontWeight="bold" fill="#36a8ff" textAnchor="middle">Ps</text>
    </App16>
    <App16 running>
      <rect x="2" y="3" width="10" height="10" fill="#fff" stroke="#d13f31" strokeWidth="1.500" strokeDasharray="2 1" />
      <path d="M10 6v11M6 13h11M8 16l3-3" stroke="#2b8fd0" strokeWidth="1.800" />
    </App16>
  </div>
);

const Taskbar = () => (
  <div className="flex h-[30px] bg-[linear-gradient(to_right,#dcebf8,#d5e1f8_30%,#d6ddf3_55%,#dce7f6_80%,#dae3f3)] text-[8.300px] tracking-[-0.300px] text-[#33343c]">
    <div className="flex w-[351px] items-center pl-[11px]">
      <svg className="h-4 w-4" viewBox="0 0 16 16">
        <circle cx="7" cy="7" r="6.500" fill="#f6a21d" />
        <path d="M3 15q-2-1-1-3 1-2 3-1 2-3 5-2 2 1 2 2 3 0 3 2t-2 2z" fill="#c3dcfa" />
      </svg>
      <div className="ml-1 leading-[10.500px]">
        <div>30°C</div>
        <div className="text-[#55565f]">Partly sunny</div>
      </div>
    </div>
    <svg className="mt-[8px] h-4 w-[15px]" viewBox="0 0 16 16">
      <path d="M0 0h7.500v7.500H0zM8.500 0H16v7.500H8.500zM0 8.500h7.500V16H0zM8.500 8.500H16V16H8.500z" fill="#1590df" />
    </svg>
    <div className="ml-[10px] mt-[5px] flex h-5 w-[144px] items-center rounded-full bg-[#f3f6fc] pl-[6px]">
      <Search className="h-[11px] w-[11px]" strokeWidth={2.500} color={INK} />
      <span className="ml-[6px] text-[9.400px] tracking-[-0.200px] text-[#5f606a]">Search</span>
      <svg className="ml-auto mr-px h-4 w-[34px]" viewBox="0 0 34 16">
        <ellipse cx="17" cy="8" rx="16.500" ry="7.500" fill="#d8c489" />
        <path d="M3 4q14-6 28 0l-3 2H5z" fill="#6fc0b4" />
        <ellipse cx="17" cy="9.500" rx="9" ry="4" fill="#6e7263" />
        <path d="M1 5l10-2-5 5zM26 4l5 2-4 3z" fill="#3a7a3f" />
      </svg>
    </div>
    <div className="ml-[2px]"><PinnedApps /></div>
    <div className="ml-auto flex items-center pr-[12px] text-[#2b2c34]">
      <ChevronUp className="h-[10px] w-[10px]" strokeWidth={2.500} />
      <div className="relative ml-[11px]">
        <Cloud className="h-[11px] w-[11px]" />
        <div className="absolute -right-px top-[5px] h-[7px] w-[7px] rounded-full bg-[#1474cf] text-center text-[5px] leading-[7px] text-white">i</div>
      </div>
      <Wifi className="ml-[12px] h-[10px] w-[10px]" />
      <Volume2 className="ml-[5px] h-[11px] w-[11px]" />
      <div className="ml-[12px] text-right leading-[10.500px]">
        <div>6:04 PM</div>
        <div>09/03/2026</div>
      </div>
    </div>
  </div>
);

const App: React.FC = () => {
  return (
    <div className="relative flex h-[720px] w-[1280px] flex-col overflow-hidden bg-[#f1f1f7] font-['Noto_Sans','Open_Sans',sans-serif]">
      <TitleBar />
      <div className="flex h-[70px] border-b border-[#c4c5ce]">
        <div className="flex w-[19px] items-center justify-center bg-[#0063a3] pr-[3px]">
          <svg className="h-[7px] w-[7px]" viewBox="0 0 7 7"><path d="M0 1h7M0 3.500h7M0 6h7" stroke="#fff" /></svg>
        </div>
        <div className="flex flex-1 flex-col">
          <TabRow />
          <Ribbon />
        </div>
      </div>
      <div className="flex h-[561px]">
        <Viewport />
        <SidePanel />
      </div>
      <SelectionBar />
      <StatusBar />
      <Taskbar />

      {/* Class badge sits over the ribbon */}
      <div className="absolute left-[1058px] top-[7px] flex h-[125px] w-[199px] items-center justify-center rounded-[63px] bg-[#ee145b] pb-[11px] font-['Liberation_Serif',serif] text-[47px] font-bold leading-[48px] tracking-[-1px] text-white shadow-[-1px_10px_6px_2px_#666]">
        <span className="scale-x-[0.910] whitespace-nowrap [-webkit-text-stroke:1.800px_white] [text-shadow:-1px_9px_6px_#000a] [word-spacing:11px]">CLASS 4</span>
      </div>
    </div>
  );
};

export default App;
